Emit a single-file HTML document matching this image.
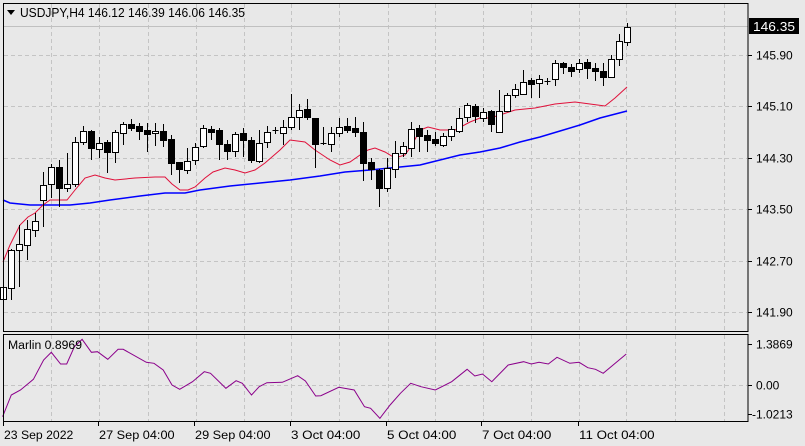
<!DOCTYPE html>
<html><head><meta charset="utf-8"><style>
html,body{margin:0;padding:0;background:#e8e8e8;width:805px;height:446px;overflow:hidden}
svg{display:block;font-family:"Liberation Sans",sans-serif}
</style></head><body>
<svg id="s" width="805" height="446" xmlns="http://www.w3.org/2000/svg">
<rect width="805" height="446" fill="#e8e8e8"/>
<g id="grid" stroke="#c4c4c4" stroke-dasharray="4,3" stroke-width="1"></g>
<line x1="3" y1="26.5" x2="748" y2="26.5" stroke="#c0c0c0"/>
<polyline id="blue" fill="none" stroke="#0000ff" stroke-width="1.5"/>
<polyline id="red" fill="none" stroke="#e0103a" stroke-width="1"/>
<g id="candles"></g>
<polyline id="osc" fill="none" stroke="#8b008b" stroke-width="1"/>
<rect x="3.5" y="3.5" width="744.5" height="328" fill="none" stroke="#000"/>
<rect x="3.5" y="334.5" width="744.5" height="87" fill="none" stroke="#000"/>
<g font-size="12" fill="#000" id="ax"></g>
<path d="M7 10 L15 10 L11 15 Z" fill="#000"/>
<text x="20" y="17" font-size="12.5" fill="#000" textLength="225" lengthAdjust="spacingAndGlyphs">USDJPY,H4  146.12 146.39 146.06 146.35</text>
<text x="8" y="349" font-size="11.5" fill="#000" textLength="74" lengthAdjust="spacingAndGlyphs">Marlin 0.8969</text>
<rect x="749" y="18" width="50" height="16" fill="#000"/>
<text x="753" y="31" font-size="12.5" fill="#fff" textLength="42" lengthAdjust="spacingAndGlyphs">146.35</text>
</svg>
<script>
var NS="http://www.w3.org/2000/svg";
function el(p,t,a){var e=document.createElementNS(NS,t);for(var k in a)e.setAttribute(k,a[k]);p.appendChild(e);return e;}
var g=document.getElementById('grid');
[51,99,148,196,244,291,339,388,435,483,531,579,626,675,724].forEach(function(x){
 el(g,'line',{x1:x+.5,y1:4,x2:x+.5,y2:331});el(g,'line',{x1:x+.5,y1:335,x2:x+.5,y2:421});});
[55,106,158,209,261,312].forEach(function(y){el(g,'line',{x1:4,y1:y+.5,x2:747,y2:y+.5});});
el(g,'line',{x1:4,y1:385.5,x2:747,y2:385.5});
var ax=document.getElementById('ax');
[["145.90",55],["145.10",106],["144.30",158],["143.50",209],["142.70",261],["141.90",312],["1.3869",344],["0.00",385],["-1.0213",414]].forEach(function(p){
 el(ax,'line',{x1:748,y1:p[1]+.5,x2:752,y2:p[1]+.5,stroke:"#000"});
 var t=el(ax,'text',{x:p[0][0]=='-'?752:756,y:p[1]+4.5});t.textContent=p[0];});
[["23 Sep 2022",3],["27 Sep 04:00",98],["29 Sep 04:00",194],["3 Oct 04:00",290],["5 Oct 04:00",386],["7 Oct 04:00",481],["11 Oct 04:00",578]].forEach(function(p){
 el(ax,'line',{x1:p[1]+.5,y1:422,x2:p[1]+.5,y2:426,stroke:"#000"});
 var t=el(ax,'text',{x:p[1]+1,y:439,textLength:p[0].length*6.3,lengthAdjust:"spacingAndGlyphs"});t.textContent=p[0];});
// candles: x, open, close, high, low (pixel y)
var C=[[3,299,287,262,322],[11,288,250,249,300],[19,250,244,225,287],[27,245,229,220,260],[35,230,221,213,237],[43,200,185,172,227],[51,184,167,164,198],[59,167,188,160,207],[67,188,184,153,192],[75,184,142,137,187],[83,142,131,126,145],[91,131,148,130,160],[99,149,143,137,158],[107,142,152,140,173],[115,152,132,130,163],[123,133,124,122,145],[131,124,128,119,131],[139,126,131,123,140],[147,130,134,123,152],[155,133,131,123,146],[163,131,140,124,147],[171,139,163,135,175],[179,162,169,162,183],[187,170,161,148,174],[195,160,147,143,165],[203,146,128,125,148],[211,129,132,126,140],[219,130,144,128,160],[227,144,151,140,160],[235,151,134,132,157],[243,133,140,128,157],[251,140,160,137,163],[259,161,143,130,163],[267,142,132,126,148],[275,130,131,127,134],[283,133,127,120,145],[291,127,117,94,130],[299,117,110,104,130],[307,109,117,99,120],[315,118,144,118,168],[323,143,144,127,145],[331,144,133,127,152],[339,133,127,118,137],[347,126,130,118,133],[355,128,132,117,137],[363,132,163,122,181],[371,162,169,158,180],[379,170,188,169,207],[387,188,168,158,192],[395,169,153,141,178],[403,153,146,142,157],[411,148,129,122,157],[419,128,136,125,152],[427,135,140,130,152],[435,139,143,132,146],[443,145,136,133,147],[451,136,129,126,141],[459,131,118,108,133],[467,117,105,103,122],[475,106,116,104,123],[483,118,112,108,122],[491,111,124,110,132],[499,132,111,90,132],[507,111,95,93,112],[515,95,89,84,98],[523,94,82,70,95],[531,80,84,78,98],[539,83,79,75,98],[547,81,81,78,85],[555,79,63,60,86],[563,63,67,62,74],[571,67,71,64,77],[579,69,63,59,73],[587,62,68,59,79],[595,68,71,63,81],[603,71,77,63,86],[611,77,59,55,78],[619,59,41,34,66],[627,42,27,23,46]];
var cg=document.getElementById('candles');
C.forEach(function(c){var x=c[0];
 el(cg,'line',{x1:x+.5,y1:c[3],x2:x+.5,y2:c[4],stroke:"#000"});
 var top=Math.min(c[1],c[2]),h=Math.max(1,Math.abs(c[1]-c[2]));
 var bull=c[2]<c[1];
 if(h<=1) el(cg,'line',{x1:x-2.5,y1:top+.5,x2:x+3.5,y2:top+.5,stroke:"#000"});
 else el(cg,'rect',{x:x-2.5,y:top+.5,width:6,height:h,fill:bull?"#fff":"#000",stroke:"#000"});
});
function pts(a){return a.map(function(p){return p[0]+","+p[1]}).join(" ");}
document.getElementById('red').setAttribute('points',pts([[3,262],[10,245],[20,225],[28,217],[35,213],[43,205],[50,200],[58,200],[67,200],[75,190],[85,178],[95,175],[105,178],[115,180],[135,178],[155,177],[165,177],[172,184],[180,190],[188,190],[195,187],[205,178],[213,172],[225,168],[235,170],[245,173],[255,170],[265,163],[280,150],[290,140],[305,142],[315,150],[330,160],[340,165],[350,162],[360,155],[368,150],[375,148],[385,152],[395,158],[405,155],[412,145],[420,130],[428,127],[440,130],[455,130],[470,122],[480,118],[490,118],[500,115],[515,110],[535,108],[555,104],[575,102],[590,104],[605,106],[615,98],[627,87]]));
document.getElementById('blue').setAttribute('points',pts([[3,200],[10,203],[30,205],[50,205],[70,205],[90,203],[110,200],[140,196],[165,193],[185,193],[200,190],[230,186],[260,183],[290,180],[320,176],[345,172],[370,170],[400,167],[420,165],[440,160],[460,155],[480,152],[500,148],[520,142],[540,137],[560,131],[580,125],[600,118],[627,111]]));
var O=[[5,290],[22,225],[40,210],[65,178],[85,120],[100,97],[118,132],[130,132],[145,80],[160,58],[178,97],[190,95],[210,118],[230,88],[240,88],[285,127],[300,130],[318,150],[335,195],[350,208],[375,185],[398,155],[410,160],[440,205],[460,182],[472,190],[490,225],[505,200],[520,188],[550,187],[580,167],[595,183],[615,228],[625,227],[660,202],[690,210],[710,260],[722,265],[740,295],[760,255],[780,220],[800,190],[820,200],[848,210],[880,185],[910,148],[925,168],[940,162],[958,185],[990,135],[1020,125],[1035,132],[1050,127],[1068,132],[1085,112],[1110,130],[1128,127],[1145,143],[1160,148],[1175,160],[1220,102]];
document.getElementById('osc').setAttribute('points',pts(O.map(function(p){return [(p[0]/1.948).toFixed(1),(320+p[1]/3).toFixed(1)]})));
</script>
</body></html>
